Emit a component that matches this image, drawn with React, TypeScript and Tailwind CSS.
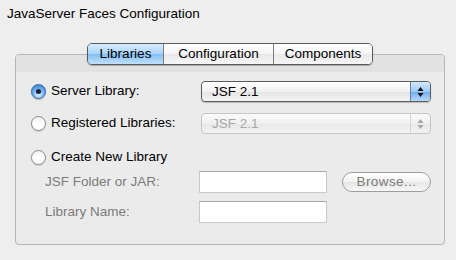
function Radio({ checked = false }: { checked?: boolean }) {
  if (checked) {
    return (
      <span className="flex h-[15px] w-[15px] shrink-0 items-center justify-center rounded-full border border-[#3466a8] bg-[radial-gradient(circle_at_50%_75%,#d6efff_0%,#7ab8f2_45%,#3f82d6_85%,#2f6cc0_100%)] shadow-[0_1px_1px_rgba(0,0,0,0.25)]">
        <span className="h-[5px] w-[5px] rounded-full bg-[#16253a]" />
      </span>
    );
  }
  return (
    <span className="h-[15px] w-[15px] shrink-0 rounded-full border border-[#8a8a8a] bg-[linear-gradient(to_bottom,#f2f2f2,#ffffff_60%,#fafafa)] shadow-[0_1px_1px_rgba(0,0,0,0.15)]" />
  );
}

function Arrows({ color }: { color: string }) {
  return (
    <svg width="7" height="12" viewBox="0 0 7 12">
      <path d="M3.5 1 L6.5 5 L0.5 5 Z" fill={color} />
      <path d="M3.5 11 L6.5 7 L0.5 7 Z" fill={color} />
    </svg>
  );
}

function Select({ disabled = false }: { disabled?: boolean }) {
  if (disabled) {
    return (
      <div className="flex h-[21px] w-[230px] overflow-hidden rounded-[4px] border border-[#c6c6c6] bg-[linear-gradient(to_bottom,#fafafa,#f0f0f0_50%,#e8e8e8_51%,#f3f3f3)]">
        <span className="flex-1 pl-[10px] leading-[19px] text-[#a8a8a8]">JSF 2.1</span>
        <span className="flex w-[20px] items-center justify-center border-l border-[#d6d6d6]">
          <Arrows color="#a5a5a5" />
        </span>
      </div>
    );
  }
  return (
    <div className="flex h-[21px] w-[230px] overflow-hidden rounded-[4px] border border-[#5c5c5c] bg-[linear-gradient(to_bottom,#ffffff,#f1f1f1_50%,#e3e3e3_51%,#f5f5f5)] shadow-[0_1px_1px_rgba(0,0,0,0.2)]">
      <span className="flex-1 pl-[10px] leading-[19px]">JSF 2.1</span>
      <span className="flex w-[20px] items-center justify-center border-l border-[#5a7fb3] bg-[linear-gradient(to_bottom,#d3e8fc,#9fcaf5_50%,#72acec_51%,#b5dafb)]">
        <Arrows color="#111111" />
      </span>
    </div>
  );
}

function TextInput() {
  return <div className="h-[22px] w-[128px] border border-[#c9c9c9] border-t-[#a9a9a9] bg-white" />;
}

export default function App() {
  return (
    <div className="h-[260px] w-[456px] overflow-hidden bg-[#eeeeee] font-['Liberation_Sans',Arial,sans-serif] text-[13.5px] text-black">
      <div className="pl-[7px] pt-[6px] leading-[16px]">JavaServer Faces Configuration</div>

      <div className="relative z-10 ml-[87px] mt-[21px] flex h-[22px] w-[286px] overflow-hidden rounded-[5px] border border-[#595959] shadow-[0_1px_1px_rgba(0,0,0,0.25)]">
        <div className="w-[75px] bg-[linear-gradient(to_bottom,#d9ecfd,#a9d2f7_50%,#86bff3_51%,#bfe0fb)] text-center leading-[20px]">
          Libraries
        </div>
        <div className="w-[110px] border-l border-[#7e7e7e] bg-[linear-gradient(to_bottom,#ffffff,#f4f4f4_50%,#e8e8e8_51%,#f6f6f6)] text-center leading-[20px]">
          Configuration
        </div>
        <div className="flex-1 border-l border-[#7e7e7e] bg-[linear-gradient(to_bottom,#ffffff,#f4f4f4_50%,#e8e8e8_51%,#f6f6f6)] text-center leading-[20px]">
          Components
        </div>
      </div>

      <div className="-mt-[11px] ml-[15px] h-[191px] w-[430px] overflow-hidden rounded-[4px] border border-[#b6b6b6] bg-[#ebebeb]">
        <div className="h-[17px] bg-[#e2e2e2]" />

        <div className="mt-[9px] flex h-[21px] items-center pl-[15px]">
          <div className="flex w-[170px] items-center gap-[5px]">
            <Radio checked />
            <span>Server Library:</span>
          </div>
          <Select />
        </div>

        <div className="mt-[11px] flex h-[21px] items-center pl-[15px]">
          <div className="flex w-[170px] items-center gap-[5px]">
            <Radio />
            <span>Registered Libraries:</span>
          </div>
          <Select disabled />
        </div>

        <div className="mt-[13px] flex h-[20px] items-center gap-[5px] pl-[15px]">
          <Radio />
          <span>Create New Library</span>
        </div>

        <div className="mt-[4px] flex h-[22px] items-center pl-[29px]">
          <span className="w-[154px] text-[#7b7b7b]">JSF Folder or JAR:</span>
          <TextInput />
          <div className="ml-[15px] flex h-[20px] w-[89px] items-center justify-center rounded-full border border-[#9d9d9d] bg-[linear-gradient(to_bottom,#ffffff,#f2f2f2_50%,#e6e6e6_51%,#f7f7f7)] tracking-[0.4px] text-[#7c7c7c]">
            Browse...
          </div>
        </div>

        <div className="mt-[8px] flex h-[22px] items-center pl-[29px]">
          <span className="w-[154px] text-[#7b7b7b]">Library Name:</span>
          <TextInput />
        </div>
      </div>
    </div>
  );
}
